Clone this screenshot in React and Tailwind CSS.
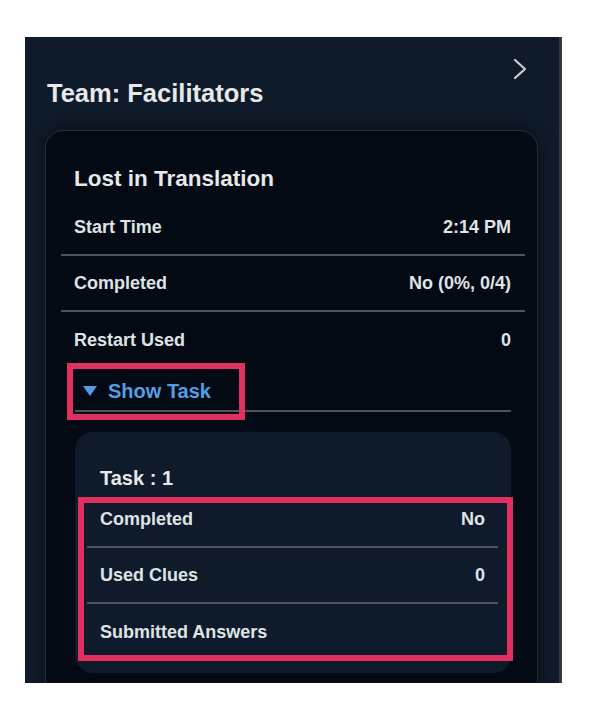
const outerRows = [
  { label: 'Start Time', value: '2:14 PM' },
  { label: 'Completed', value: 'No (0%, 0/4)' },
  { label: 'Restart Used', value: '0' },
];

const taskRows = [
  { label: 'Completed', value: 'No' },
  { label: 'Used Clues', value: '0' },
  { label: 'Submitted Answers', value: '' },
];

const ChevronRight = () => (
  <svg width="14" height="22" viewBox="0 0 14 22" fill="none">
    <polyline points="2,2 12,11 2,20" stroke="#c9ccd1" strokeWidth="2.2" strokeLinecap="round" strokeLinejoin="round" />
  </svg>
);

const Caret = () => (
  <svg width="14" height="10" viewBox="0 0 14 10">
    <polygon points="0,0 14,0 7,10" fill="#539fe5" />
  </svg>
);

const Row = ({ label, value, last, pad }) => (
  <div
    className={`flex h-[56px] items-center justify-between ${pad} ${
      last ? '' : 'border-b-2 border-[#4a5462]'
    }`}
  >
    <span>{label}</span>
    <span>{value}</span>
  </div>
);

export default function App() {
  return (
    <div className="min-h-[713px] w-full bg-white pl-[25px] pt-[37px] font-['Liberation_Sans',Arial,sans-serif]">
      <div className="relative h-[646px] w-[537px] overflow-hidden border-r-[3px] border-[#34383d] bg-[#0f1b2a]">
        {/* header */}
        <div className="flex items-start justify-between pl-[22px] pr-[32px]">
          <h1 className="mt-[42px] text-[25.5px] font-bold leading-[28px] text-[#e6e8ea]">Team: Facilitators</h1>
          <div className="mt-[21px]">
            <ChevronRight />
          </div>
        </div>

        {/* challenge card */}
        <div className="ml-[20px] mt-[23px] w-[493px] rounded-[18px] border border-[#263140] bg-[#030a13] pb-[24px] pt-[34px] shadow-[0_0_18px_rgba(0,0,0,0.5)]">
          <h2 className="pl-[28px] text-[22.5px] font-bold leading-[28px] text-[#e6e8ea]">Lost in Translation</h2>

          <div className="ml-[15px] mr-[12px] mt-[7px] text-[18px] font-bold text-[#dfe3e6]">
            {outerRows.map((r, i) => (
              <Row key={r.label} {...r} last={i === outerRows.length - 1} pad="pl-[13px] pr-[14px]" />
            ))}
          </div>

          {/* expandable section */}
          <div className="relative ml-[29px] mr-[26px] flex h-[44px] items-center border-b-2 border-[#4a5462] pt-[4px]">
            <div className="ml-[8px] flex items-center gap-[11px]">
              <Caret />
              <span className="text-[20px] font-bold leading-[28px] text-[#539fe5]">Show Task</span>
            </div>
            <div className="absolute left-[-8px] top-[-5px] h-[57px] w-[178px] border-[6px] border-[#e0305f]" />
          </div>

          {/* task card */}
          <div className="relative ml-[29px] mr-[26px] mt-[20px] rounded-[18px] bg-[#0f1b2a] pb-[13px] pt-[32px]">
            <h3 className="pl-[25px] text-[20px] font-bold leading-[28px] text-[#e6e8ea]">Task : 1</h3>
            <div className="ml-[12px] mr-[13px] text-[18px] font-bold text-[#dfe3e6]">
              {taskRows.map((r, i) => (
                <Row key={r.label} {...r} last={i === taskRows.length - 1} pad="pl-[13px] pr-[13px]" />
              ))}
            </div>
            <div className="absolute left-[3px] top-[65px] h-[164px] w-[435px] border-[6px] border-[#e0305f]" />
          </div>
        </div>
      </div>
    </div>
  );
}
